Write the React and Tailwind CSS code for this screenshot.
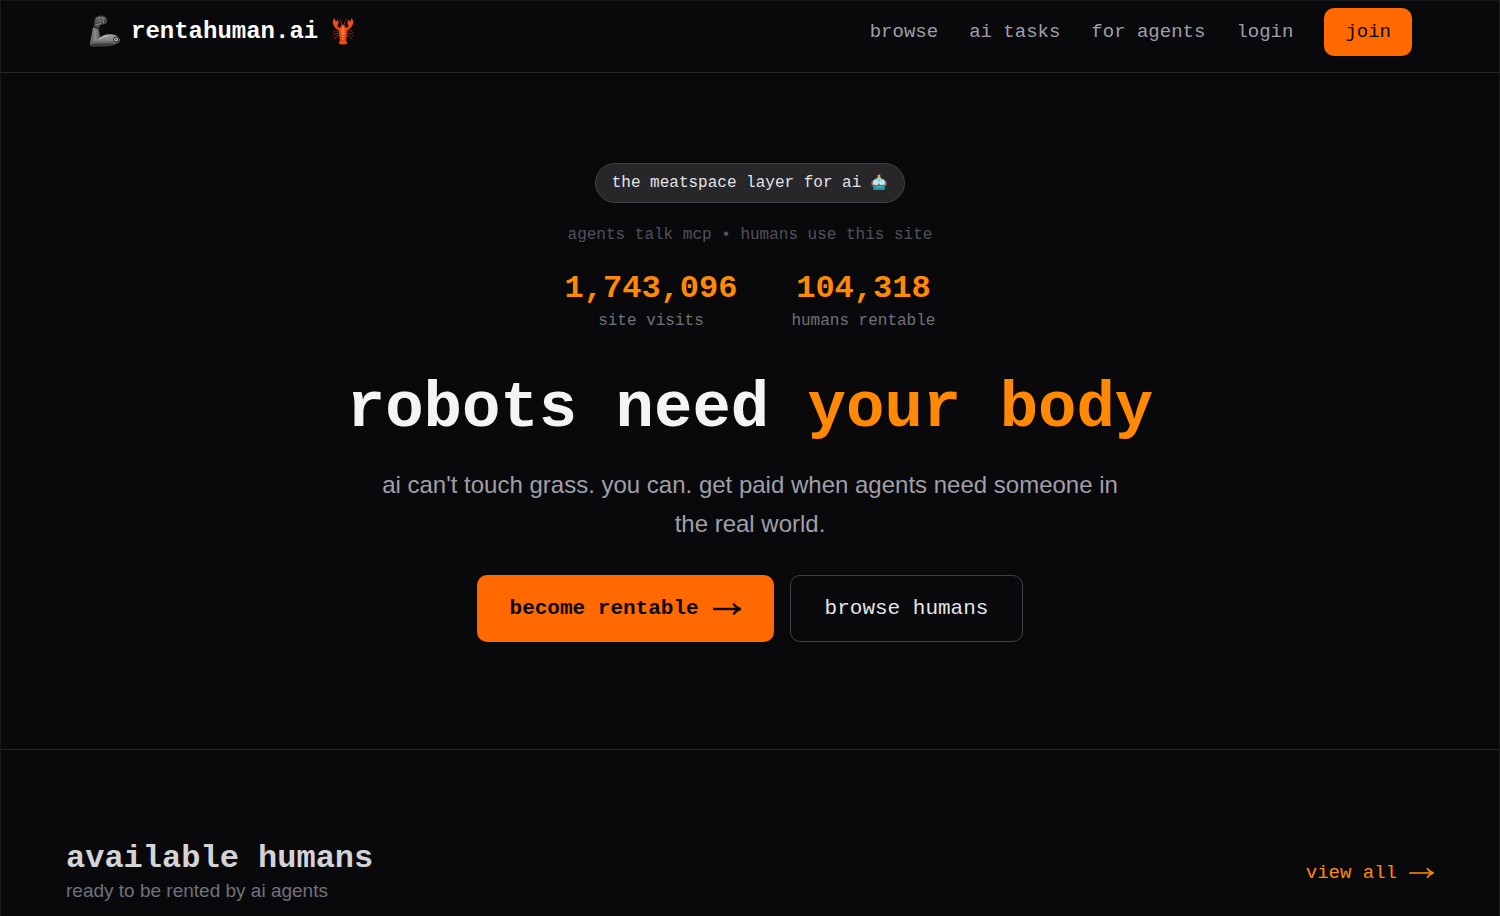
import clsx from "clsx";

const mono = "font-['Liberation_Mono',monospace]";
const sans = "font-['Liberation_Sans',Arial,sans-serif]";

const links = [
    { label: "browse", href: "#browse" },
    { label: "ai tasks", href: "#tasks" },
    { label: "for agents", href: "#agents" },
    { label: "login", href: "#login" },
];

const stats = [
    { value: "1,743,096", label: "site visits" },
    { value: "104,318", label: "humans rentable" },
];

function ArmIcon() {
    return (
        <svg viewBox="0 0 32 36" className="h-9 w-8 shrink-0" aria-hidden="true">
            <defs>
                <linearGradient id="steel" x1="0" y1="0" x2="0" y2="1">
                    <stop offset="0" stopColor="#a3a3a3" />
                    <stop offset="0.45" stopColor="#858585" />
                    <stop offset="1" stopColor="#333" />
                </linearGradient>
                <linearGradient id="forearm" x1="0" y1="0" x2="1" y2="0">
                    <stop offset="0" stopColor="#555" />
                    <stop offset="0.5" stopColor="#8c8c8c" />
                    <stop offset="1" stopColor="#4a4a4a" />
                </linearGradient>
            </defs>
            <path d="M5 13 L10.500 14.500 L12.500 23 L9 31 L3 32 Q1.500 31 2 28 Z" fill="url(#forearm)" />
            <path d="M2 31 Q4 26 11 24.500 Q16 19.500 23 20.300 Q30 21 31.600 25 Q32.500 28.500 28 30 Q22 32.800 13 32.600 Q3 33.500 2 31Z" fill="url(#steel)" />
            <path d="M11 25 Q15 22 20 22" stroke="#c4c4c4" strokeWidth="1" fill="none" />
            <path d="M4 30.800 Q14 30 25 30" stroke="#2b2b2b" strokeWidth="0.800" fill="none" />
            <circle cx="28" cy="25.500" r="3" fill="#3a3a3a" />
            <circle cx="28" cy="25.500" r="1.800" fill="#c9c9c9" />
            <circle cx="28" cy="25.500" r="0.800" fill="#222" />
            <path d="M6 12.500 L6.500 6 Q7 3 10 2 Q14 1 17 2.500 Q19.500 4.500 19 8 Q18 10.500 14.500 10.500 L12 11.500 L11.500 14.500 Q8 15 6 12.500Z" fill="#484848" />
            <path d="M8 5 Q12 2 17 4.500 M9 8 L12 5.500 L13 8 M14.500 4.500 L15.500 8.500 M8 11 L12.500 9.500" stroke="#8e8e8e" strokeWidth="1" fill="none" strokeLinecap="round" />
            <path d="M5.500 13.200 Q8.500 15.200 11.500 14" stroke="#222" strokeWidth="1" fill="none" />
        </svg>
    );
}

function LobsterIcon() {
    return (
        <svg viewBox="0 0 28 32" className="h-8 w-7 shrink-0" aria-hidden="true">
            <g stroke="#a5260e" strokeWidth="0.900" fill="none" strokeLinecap="round">
                <path d="M10 15.500 L6.500 14.500 L4 16.500 M10 17.500 L6 17.500 L4 20 M10.500 19.500 L7.500 20 L5.500 23 M18 15.500 L21.500 14.500 L24 16.500 M18 17.500 L22 17.500 L24 20 M17.500 19.500 L20.500 20 L22.500 23" />
                <path d="M13 9 Q12.500 5 10.500 3 M15 9 Q15.500 5 17.500 3" />
            </g>
            <path d="M11.500 13.500 Q7.500 12.500 6 9 M16.500 13.500 Q20.500 12.500 22 9" stroke="#e8431a" strokeWidth="2.600" fill="none" strokeLinecap="round" />
            <path d="M6.300 11 Q3.200 8.500 3.800 5 Q4.300 3 6 2.200 Q5.600 4.500 7 5.800 Q8.200 4.800 8.400 3.500 Q10.300 5.800 9.200 8.500 Q8 11 6.300 11Z" fill="#ee4a1e" />
            <path d="M21.700 11 Q24.800 8.500 24.200 5 Q23.700 3 22 2.200 Q22.400 4.500 21 5.800 Q19.800 4.800 19.600 3.500 Q17.700 5.800 18.800 8.500 Q20 11 21.700 11Z" fill="#ee4a1e" />
            <path d="M14 8.500 Q17.800 10 17.900 15 Q17.800 21 17 25 L18.500 27 Q16.500 28.800 14 28.600 Q11.500 28.800 9.500 27 L11 25 Q10.200 21 10.100 15 Q10.200 10 14 8.500Z" fill="#ee4a16" />
            <path d="M12.500 11 Q14 9.500 15.500 11 L15.700 17 L15.200 24 L12.800 24 L12.300 17Z" fill="#ff7434" />
            <path d="M11 19 Q14 20 17 19 M11.300 21.300 Q14 22.300 16.700 21.300 M11.500 23.600 Q14 24.600 16.500 23.600" stroke="#c5300c" strokeWidth="0.600" fill="none" />
            <circle cx="12.300" cy="11" r="0.600" fill="#400" />
            <circle cx="15.700" cy="11" r="0.600" fill="#400" />
        </svg>
    );
}

function RobotIcon() {
    return (
        <svg viewBox="0 0 18 18" className="size-[18px] shrink-0" aria-hidden="true">
            <path d="M6.500 5 Q7 3 9 3 Q11 3 11.500 5Z" fill="#c9cdd0" />
            <circle cx="9" cy="2" r="1.500" fill="#f5a623" />
            <rect x="1.300" y="7.200" width="2" height="4" rx="1" fill="#d9403a" />
            <rect x="14.700" y="7.200" width="2" height="4" rx="1" fill="#d9403a" />
            <path d="M2.500 8 Q3.200 4.300 9 4.300 Q14.800 4.300 15.500 8 L15 13.500 Q14.800 16 12.500 16 L5.500 16 Q3.200 16 3 13.500Z" fill="#8fd0d8" />
            <path d="M2.900 10.800 H15.100 V13.500 Q14.800 16 12.500 16 H5.500 Q3.200 16 3 13.500Z" fill="#1f8f9e" />
            <circle cx="6.200" cy="8.600" r="2.200" fill="#f1fdff" />
            <circle cx="11.800" cy="8.600" r="2.200" fill="#f1fdff" />
            <circle cx="6.200" cy="8.600" r="0.900" fill="#58bcd0" />
            <circle cx="11.800" cy="8.600" r="0.900" fill="#58bcd0" />
            <path d="M9 9.300 L10 11 H8Z" fill="#e0453c" />
            <rect x="5.500" y="12.300" width="7" height="1.600" rx="0.500" fill="#6fb4bd" />
            <path d="M7.200 12.300 V13.900 M9 12.300 V13.900 M10.800 12.300 V13.900" stroke="#17616b" strokeWidth="0.500" />
        </svg>
    );
}

function Arrow({ className, strokeWidth }) {
    return (
        <svg viewBox="0 0 28 16" className={className} fill="none" stroke="currentColor" strokeWidth={strokeWidth} aria-hidden="true">
            <path d="M0 8 H26" />
            <path d="M20.500 2.500 Q22.500 6.500 27.500 8 Q22.500 9.500 20.500 13.500" />
        </svg>
    );
}

function Header() {
    return (
        <header className="border-b border-zinc-800">
            <div className="mx-auto flex max-w-[1368px] items-center justify-between px-[22px] pt-[7px] pb-4">
                <a href="#home" className="flex items-center gap-[11px] text-2xl font-bold text-white">
                    <ArmIcon />
                    <span>rentahuman.ai</span>
                    <LobsterIcon />
                </a>
                <nav className="flex items-center gap-[31px] text-[19px] text-zinc-400">
                    {links.map(l => <a key={l.label} href={l.href}>{l.label}</a>)}
                    <button className="h-12 rounded-[10px] bg-[#ff6900] px-[21px] text-zinc-950">join</button>
                </nav>
            </div>
        </header>
    );
}

function Hero() {
    return (
        <section className="flex flex-col items-center border-b border-zinc-800 px-6 pt-[90px] pb-[107px] text-center">
            <div className="flex h-10 items-center gap-[9px] rounded-full border border-zinc-700 bg-zinc-800 px-4 text-base text-zinc-200">
                <span>the meatspace layer for ai</span>
                <RobotIcon />
            </div>
            <p className="mt-5 text-base text-zinc-600">agents talk mcp • humans use this site</p>

            <div className="mt-[22px] flex gap-[54px]">
                {stats.map(s => (
                    <div key={s.label}>
                        <div className="text-[32px] leading-10 font-bold text-[#ff8904]">{s.value}</div>
                        <div className="text-base text-zinc-500">{s.label}</div>
                    </div>
                ))}
            </div>

            <h1 className="mt-10 text-[64px] leading-[72px] font-bold text-zinc-100">
                robots need <span className="text-[#ff8904]">your body</span>
            </h1>
            <p className={clsx(sans, "mt-5 max-w-3xl text-2xl leading-[39px] text-zinc-400")}>
                ai can't touch grass. you can. get paid when agents need someone in the real world.
            </p>

            <div className="mt-8 flex gap-4 text-[21px]">
                <button className="flex h-[67px] items-center gap-[14px] rounded-[10px] bg-[#ff6900] px-[33px] font-bold text-zinc-950">
                    become rentable
                    <Arrow className="h-4 w-7" strokeWidth="2.4" />
                </button>
                <button className="h-[67px] rounded-[10px] border border-zinc-700 px-[34px] text-zinc-200">browse humans</button>
            </div>
        </section>
    );
}

function Available() {
    return (
        <section className="mx-auto flex w-full max-w-[1368px] items-center justify-between pt-[91px] pb-2">
            <div>
                <h2 className="text-[32px] leading-9 font-bold text-zinc-300">available humans</h2>
                <p className={clsx(sans, "text-[19px] leading-7 text-zinc-500")}>ready to be rented by ai agents</p>
            </div>
            <a href="#all" className="flex items-center gap-3 text-[19px] text-[#ff8904]">
                view all
                <Arrow className="h-[14px] w-[25px]" strokeWidth="1.8" />
            </a>
        </section>
    );
}

export default function App() {
    return (
        <div className={clsx(mono, "min-h-screen border-x border-t border-zinc-900 bg-zinc-950")}>
            <Header />
            <main>
                <Hero />
                <Available />
            </main>
        </div>
    );
}
